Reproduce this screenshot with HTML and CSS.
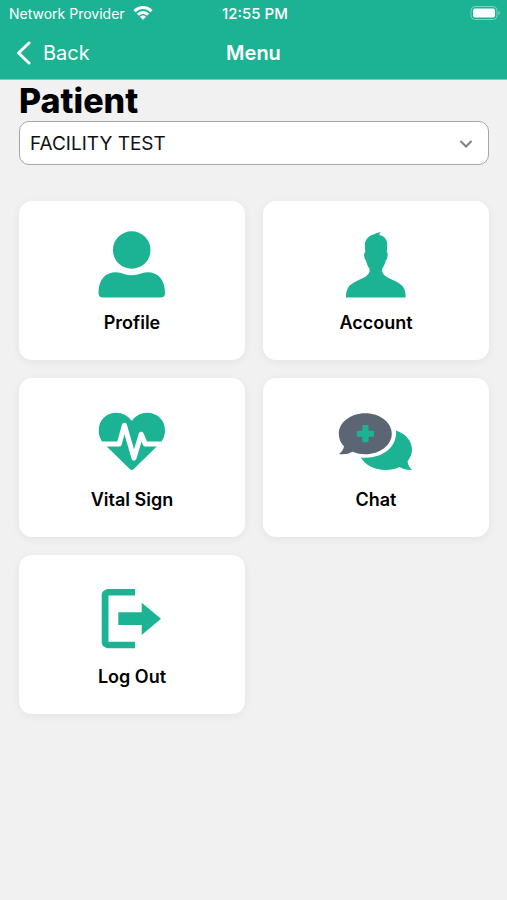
FILE: index.html
```html
<!DOCTYPE html>
<html lang="en">
<head>
    <meta charset="UTF-8">
    <meta name="viewport" content="width=device-width, initial-scale=1.0">
    <title>Menu</title>
    <link rel="stylesheet" href="styles.css">
</head>
<body>
    <header class="header">
        <div class="status-bar">
            <div class="network">
                <span>Network Provider</span>
                <svg width="20" height="16" viewBox="0 0 20 16" fill="none" stroke="#fff" stroke-width="3">
                    <path d="M1.5 6.2C6.3 1.4 13.7 1.4 18.5 6.2"/>
                    <path d="M4.9 9.7C7.8 6.9 12.2 6.9 15.1 9.7"/>
                    <path d="M10 14.8L6.9 11.7C8.7 10 11.3 10 13.1 11.7Z" fill="#fff" stroke="none"/>
                </svg>
            </div>
            <span class="time">12:55 PM</span>
            <svg class="battery" width="31" height="14" viewBox="0 0 31 14">
                <rect x="1" y="0.5" width="26" height="13" rx="4" fill="none" stroke="#7dd3bd"/>
                <rect x="3" y="2.5" width="22" height="9" rx="2" fill="#fff"/>
                <path d="M28.5 5V9Q30 8.5 30 7T28.5 5Z" fill="#7dd3bd"/>
            </svg>
        </div>
        <nav class="nav-bar">
            <a class="back" href="#">
                <svg width="15" height="24" viewBox="0 0 15 24" fill="none" stroke="#fff" stroke-width="3" stroke-linecap="round" stroke-linejoin="round">
                    <path d="M13 2L2.5 12L13 22"/>
                </svg>
                <span>Back</span>
            </a>
            <span class="nav-title">Menu</span>
        </nav>
    </header>

    <main class="content">
        <h1><label for="facility">Patient</label></h1>
        <div class="select-box">
            <select id="facility">
                <option>FACILITY TEST</option>
            </select>
            <svg class="chevron" width="14" height="10" viewBox="0 0 14 10" fill="none" stroke="#808080" stroke-width="2">
                <path d="M1.5 2L7 7.5L12.5 2"/>
            </svg>
        </div>

        <div class="menu">
            <button class="card" type="button">
                <svg class="icon" viewBox="0 0 80 80">
                    <circle cx="39.7" cy="25" r="18.8"/>
                    <path d="M6.5 68C6.5 55 13 47.3 24 47.3C30 47.3 32 50.3 39.7 50.3S49.5 47.3 55.5 47.3C66.5 47.3 73 55 73 68Q73 72.5 68.5 72.5H11Q6.5 72.5 6.5 68Z"/>
                </svg>
                <span>Profile</span>
            </button>
            <button class="card" type="button">
                <svg class="icon" viewBox="0 0 80 80">
                    <path d="M44.7 7C43.2 8.5 43 9.6 44 10.3C49 11.5 51.3 15 51.3 20L50.8 26.8Q52 27.8 51.6 31Q51.2 34.5 49.8 35.3C49 39 47.8 41.5 46.2 43.7Q45.5 47 47.5 49.2C50.5 52.5 54.5 53.8 59 56C67 59.8 69.7 63.5 69.7 72.4H10C10 63.5 12.7 59.8 20.7 56C25.2 53.8 29.2 52.5 32.2 49.2Q34.2 47 33.5 43.7C31.9 41.5 30.7 39 29.9 35.3Q28.5 34.5 28.1 31Q27.8 27.8 29.3 26.8L28.8 21C28.8 15 31.5 12 36.5 9.8C39.5 8.5 42 7.5 44.7 7Z"/>
                </svg>
                <span>Account</span>
            </button>
            <button class="card" type="button">
                <svg class="icon" viewBox="0 0 80 80">
                    <path d="M39.7 18.7C44 13.5 49 10.7 55 10.7C66 10.7 73 18.5 73 28.5C73 36 69.5 40 64 45.3L41.5 67.2Q39.7 68.7 38 67.2L15.5 45.3C10 40 6.7 36 6.7 28.5C6.7 18.5 13.5 10.7 24.5 10.7C30.5 10.7 35.5 13.5 39.7 18.7Z"/>
                    <path class="pulse" d="M5 42H27.2L32.4 23.2L42 56L49.2 32.2L53.3 42H69"/>
                </svg>
                <span>Vital Sign</span>
            </button>
            <button class="card" type="button">
                <svg class="icon" viewBox="0 0 80 80">
                    <path d="M60 28.5C70 32 76 39 76 47.5C76 52.5 74 56 71.5 59.3Q72 64 76 68Q68.5 68.2 63.5 65C59 67.3 54.5 68 50 68C38 68 29 63 25 55.5C45 57.5 61.5 46 60 28.5Z"/>
                    <path class="slate" d="M29.3 11.2C44 11.2 55.8 20.4 55.8 31.7S44 52.2 29.3 52.2Q22.5 52.2 16.5 49.7Q11 53 3 52Q7.5 48.5 8 44.3Q2.8 39 2.8 31.7C2.8 20.4 14.6 11.2 29.3 11.2Z"/>
                    <path d="M27.3 23H31.5Q32.5 23 32.5 24V28.7H37Q38 28.7 38 29.7V33.7Q38 34.7 37 34.7H32.5V39.3Q32.5 40.3 31.5 40.3H27.3Q26.3 40.3 26.3 39.3V34.7H21.7Q20.7 34.7 20.7 33.7V29.7Q20.7 28.7 21.7 28.7H26.3V24Q26.3 23 27.3 23Z"/>
                </svg>
                <span>Chat</span>
            </button>
            <button class="card" type="button">
                <svg class="icon" viewBox="0 0 80 80">
                    <path d="M43 10V16.5H16.5V62.8H43V69.2H15.5Q9.7 67.5 9.7 63.5V15.7Q9.7 11.7 15.5 10Z"/>
                    <path d="M26.3 33.3H49.7V23.7L69 39.7L49.7 56V46H26.3Z"/>
                </svg>
                <span>Log Out</span>
            </button>
        </div>
    </main>
</body>
</html>
```
FILE: styles.css
```css
* {
    box-sizing: border-box;
}
body {
    margin: 0;
    background: #f1f1f1;
    color: #000;
    font-family: Inter, sans-serif;
}
.header {
    background: #1cb394;
    color: #fff;
    border-bottom: 1px solid #6fd0bc;
}
.status-bar,
.nav-bar {
    display: grid;
    grid-template-columns: 1fr auto 1fr;
    align-items: center;
}
.status-bar {
    height: 26px;
    padding: 0 6px 0 9px;
    font-size: 14px;
}
.network {
    display: flex;
    align-items: center;
    gap: 8px;
}
.time {
    font-size: 15px;
    font-weight: 500;
}
.battery {
    justify-self: end;
}
.nav-bar {
    height: 53px;
    padding: 0 16px;
    font-size: 20px;
}
.back {
    display: flex;
    align-items: center;
    gap: 12px;
    color: #fff;
    text-decoration: none;
}
.nav-title {
    font-weight: 600;
}
.content {
    padding: 0 18px 18px 19px;
}
h1 {
    margin: 0;
    font-size: 34px;
    line-height: 41px;
    font-weight: 800;
}
.select-box {
    position: relative;
}
select {
    display: block;
    appearance: none;
    width: 100%;
    height: 44px;
    padding: 0 40px 0 10px;
    border: 1px solid #a6a6a6;
    border-radius: 10px;
    background: #fff;
    color: #111;
    font-family: inherit;
    font-size: 19px;
}
.chevron {
    position: absolute;
    right: 16px;
    top: 18px;
    pointer-events: none;
}
.menu {
    display: grid;
    grid-template-columns: 1fr 1fr;
    gap: 18px;
    margin-top: 36px;
}
.card {
    display: flex;
    flex-direction: column;
    align-items: center;
    gap: 5px;
    padding: 24px 10px;
    border: 0;
    border-radius: 13px;
    background: #fff;
    box-shadow: 0 2px 10px rgba(0, 0, 0, 0.06);
    color: #000;
    font-family: inherit;
    font-size: 18px;
    line-height: 26px;
    font-weight: 600;
}
.icon {
    width: 80px;
    height: 80px;
    fill: #1cb394;
}
.icon .slate {
    fill: #5b6573;
}
.icon .pulse {
    fill: none;
    stroke: #fff;
    stroke-width: 5;
    stroke-linejoin: round;
}
```
